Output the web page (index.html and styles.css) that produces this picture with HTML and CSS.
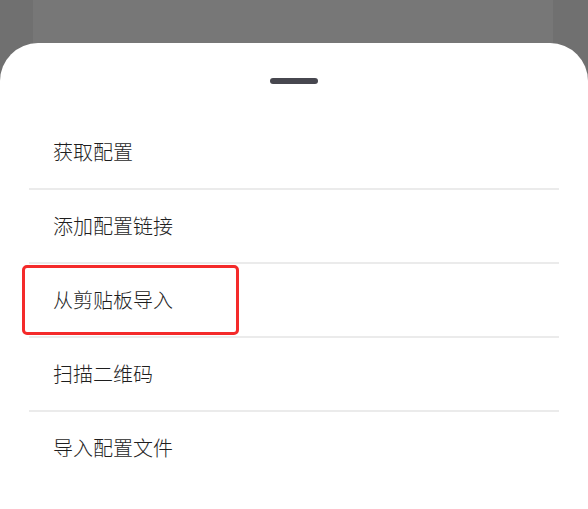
FILE: index.html
```html
<!DOCTYPE html>
<html lang="zh-CN">
<head>
<meta charset="utf-8">
<title>配置</title>
<link rel="stylesheet" href="styles.css">
</head>
<body>
<div class="backdrop">
  <div class="behind-card"></div>
</div>
<div class="sheet">
  <div class="handle"></div>
  <ul class="menu">
    <li class="item">获取配置</li>
    <li class="item">添加配置链接</li>
    <li class="item highlighted">从剪贴板导入<span class="mark"></span></li>
    <li class="item">扫描二维码</li>
    <li class="item">导入配置文件</li>
  </ul>
</div>
</body>
</html>
```

FILE: styles.css
```css
html, body {
  margin: 0;
  padding: 0;
  height: 100%;
}
body {
  background: #707070;
  font-family: "Noto Sans CJK SC", "Noto Sans", sans-serif;
  display: flex;
  flex-direction: column;
  overflow: hidden;
}
.backdrop {
  height: 44px;
  flex: none;
  display: flex;
  padding: 0 35px 0 33px;
}
.behind-card {
  flex: 1;
  background: #777777;
}
.sheet {
  flex: 1;
  background: #ffffff;
  border-radius: 38px 38px 0 0;
  margin-top: -1px;
  padding-top: 35px;
  display: flex;
  flex-direction: column;
  align-items: center;
}
.handle {
  width: 48px;
  height: 6px;
  border-radius: 3px;
  background: #47474f;
}
.menu {
  list-style: none;
  margin: 32px 0 0 0;
  padding: 0;
  align-self: stretch;
  margin-left: 29px;
  margin-right: 29px;
}
.item {
  position: relative;
  height: 72px;
  line-height: 72px;
  padding-left: 24px;
  font-size: 20px;
  font-weight: 300;
  color: #1e1e1e;
  border-bottom: 2px solid #ebebeb;
}
.item:last-child {
  border-bottom: none;
}
.mark {
  position: absolute;
  left: -7px;
  top: 1px;
  width: 211px;
  height: 64px;
  border: 3px solid #f42a2a;
  border-radius: 5px;
}
```
